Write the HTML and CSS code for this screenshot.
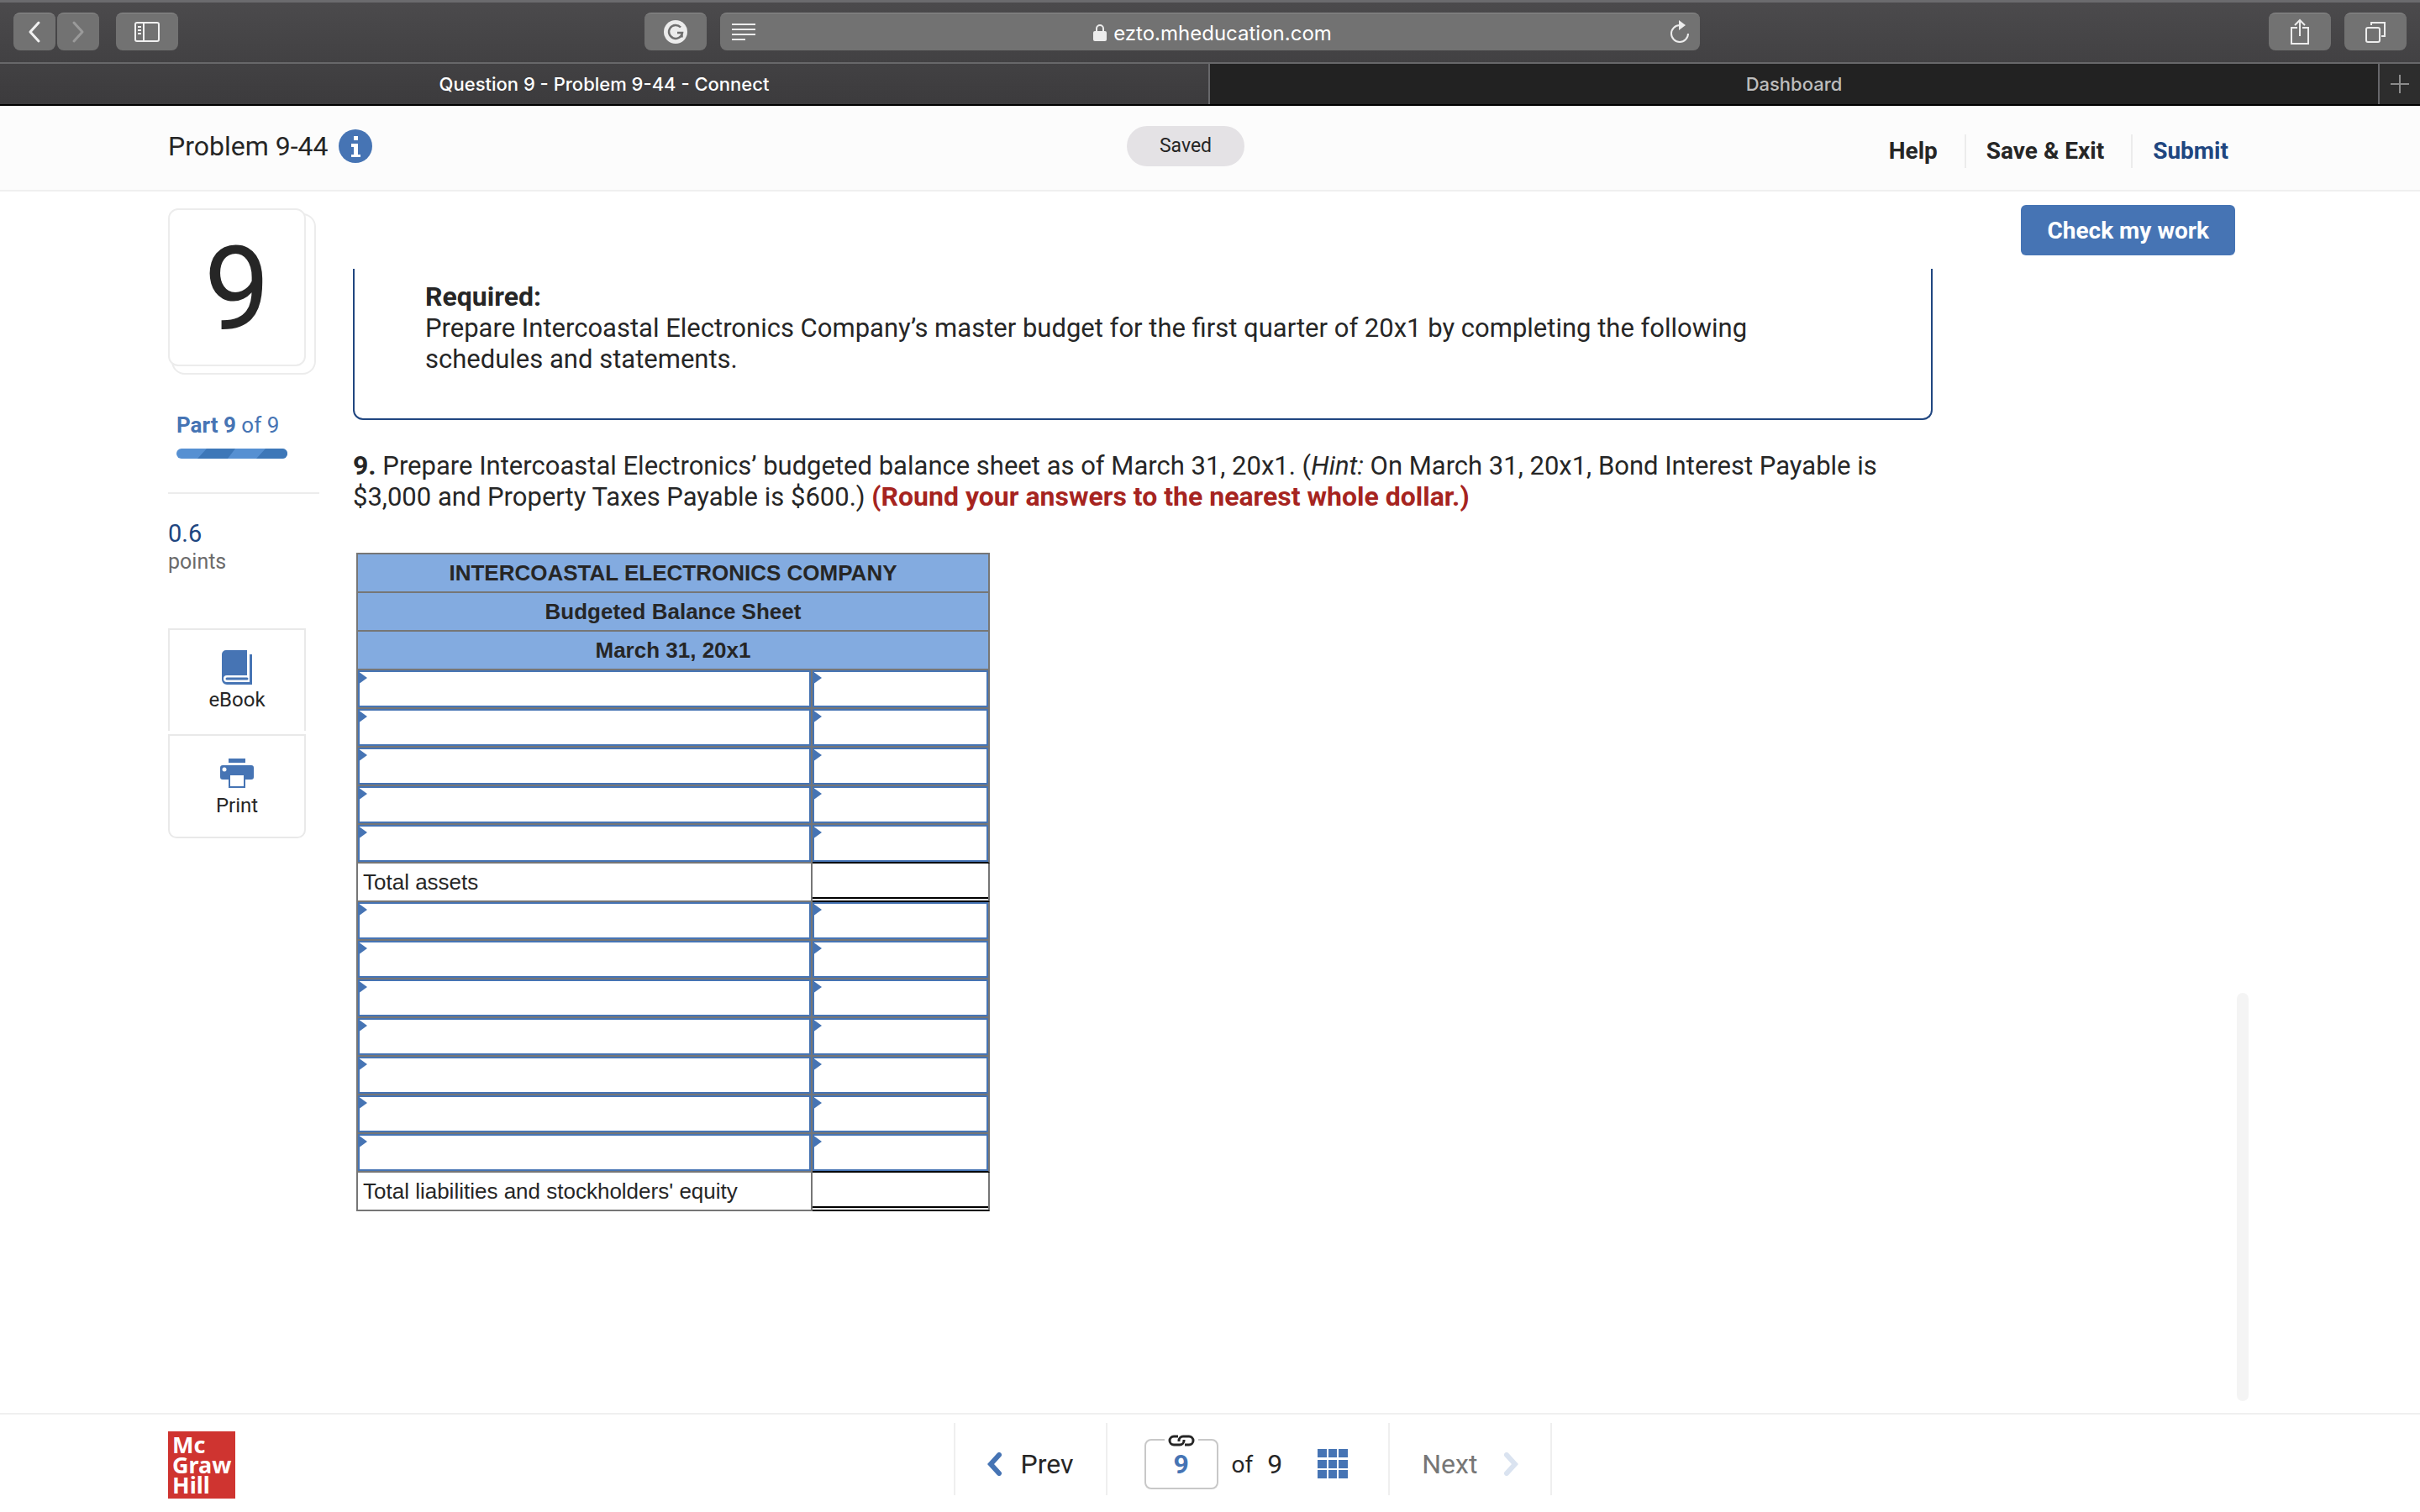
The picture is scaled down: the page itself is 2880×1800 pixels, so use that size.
FILE: index.html
```
<!DOCTYPE html>
<html lang="en">
<head>
    <meta charset="UTF-8">
    <meta name="viewport" content="width=device-width, initial-scale=1.0">
    <title>Question 9 - Problem 9-44 - Connect</title>
    <link rel="stylesheet" href="styles.css">
</head>
<body>
    <div class="toolbar">
        <div class="tool-group">
            <button class="tool tool-small" aria-label="Back">
                <svg width="16" height="28" viewBox="0 0 16 28"><path d="M13 3L3 14l10 11" fill="none" stroke="#f0f0f0" stroke-width="3" stroke-linecap="round" stroke-linejoin="round"/></svg>
            </button>
            <button class="tool tool-small" aria-label="Forward">
                <svg width="16" height="28" viewBox="0 0 16 28"><path d="M3 3l10 11L3 25" fill="none" stroke="#9a9a9a" stroke-width="3" stroke-linecap="round" stroke-linejoin="round"/></svg>
            </button>
            <button class="tool tool-sidebar" aria-label="Show sidebar">
                <svg width="30" height="24" viewBox="0 0 30 24" fill="none" stroke="#f0f0f0" stroke-width="2"><rect x="1" y="1" width="28" height="22" rx="2"/><path d="M11 1v22M4 6h4M4 10h4M4 14h4"/></svg>
            </button>
        </div>
        <div class="tool-group tool-center">
            <button class="tool" aria-label="Grammarly">
                <svg width="30" height="30" viewBox="0 0 30 30"><circle cx="15" cy="15" r="14" fill="#ececec"/><path d="M21 9.500a8 8 0 1 0 2 6.500h-6M22.500 15.500v6" fill="none" stroke="#6f6f6f" stroke-width="2.500"/></svg>
            </button>
            <div class="address">
                <svg width="28" height="22" viewBox="0 0 28 22"><path d="M0 2h28M0 8h28M0 14h28M0 20h16" stroke="#ececec" stroke-width="2"/></svg>
                <span class="address-text">
                    <svg width="16" height="20" viewBox="0 0 16 20"><rect y="8" width="16" height="12" rx="2" fill="#ececec"/><path d="M4 9V5a4 4 0 0 1 8 0v4" fill="none" stroke="#ececec" stroke-width="2"/></svg>
                    ezto.mheducation.com
                </span>
                <button class="reload" aria-label="Reload">
                    <svg width="24" height="28" viewBox="0 0 24 28"><path d="M12 6a10 10 0 1 0 10 10" fill="none" stroke="#ececec" stroke-width="2"/><path d="M11 0l8 6-8 6z" fill="#ececec"/></svg>
                </button>
            </div>
        </div>
        <div class="tool-group tool-right">
            <button class="tool" aria-label="Share">
                <svg width="24" height="32" viewBox="0 0 24 32" fill="none" stroke="#ececec" stroke-width="2"><path d="M9 11H2v19h20V11h-7M12 21V3M6 8l6-6 6 6"/></svg>
            </button>
            <button class="tool" aria-label="Show tabs">
                <svg width="24" height="26" viewBox="0 0 24 26" fill="none" stroke="#ececec" stroke-width="2"><rect x="1" y="8" width="16" height="17" rx="2"/><path d="M7 5V2h16v16h-4"/></svg>
            </button>
        </div>
    </div>
    <div class="tabs">
        <button class="tab tab-active">Question 9 - Problem 9-44 - Connect</button>
        <button class="tab tab-other">Dashboard</button>
        <button class="tab tab-add" aria-label="New tab">
            <svg width="22" height="22" viewBox="0 0 22 22"><path d="M11 0v22M0 11h22" stroke="#8c8c8c" stroke-width="2"/></svg>
        </button>
    </div>

    <header class="header">
        <h1 class="title">
            Problem 9-44
            <svg width="40" height="40" viewBox="0 0 40 40"><circle cx="20" cy="20" r="20" fill="#4674b4"/><path d="M18 8h5v5h-5zM15 17h8v13h3v3H15v-3h3v-9h-3z" fill="#fff"/></svg>
        </h1>
        <span class="saved">Saved</span>
        <nav class="actions">
            <a href="#">Help</a>
            <a href="#">Save &amp; Exit</a>
            <a href="#" class="submit">Submit</a>
        </nav>
    </header>

    <main class="main">
        <aside class="side">
            <div class="card">9</div>
            <div class="part">
                <b>Part 9</b> of 9
                <svg width="132" height="12" viewBox="0 0 132 12"><clipPath id="pill"><rect width="132" height="12" rx="6"/></clipPath><g clip-path="url(#pill)"><rect width="132" height="12" fill="#5690d2"/><path d="M36 0h34l-9 12H25zM106 0h34v12H95z" fill="#3d77b8"/></g></svg>
            </div>
            <div class="points"><span>0.6</span>points</div>
            <div class="tiles">
                <button class="tile tile-book">
                    <svg width="36" height="41" viewBox="0 0 36 41"><path d="M5 0h25v30H6a4 4 0 0 0 0 8h27V5h3v36H6a6 6 0 0 1-6-6V5a5 5 0 0 1 5-5z" fill="#4674b4"/><path d="M6 34h24" stroke="#4674b4" stroke-width="3" stroke-linecap="round"/></svg>
                    eBook
                </button>
                <button class="tile tile-print">
                    <svg width="40" height="36" viewBox="0 0 40 36"><path d="M10 0h20v5H10zM3 8h34a3 3 0 0 1 3 3v11a3 3 0 0 1-3 3h-7v10H10V25H3a3 3 0 0 1-3-3V11a3 3 0 0 1 3-3z" fill="#4674b4"/><path d="M12 20h16v13H12z" fill="#fff"/><circle cx="5" cy="13" r="2.500" fill="#fff"/></svg>
                    Print
                </button>
            </div>
        </aside>

        <section class="content">
            <div class="required">
                <b>Required:</b><br>
                Prepare Intercoastal Electronics Company’s master budget for the first quarter of 20x1 by completing the following schedules and statements.
            </div>
            <p class="question"><b>9.</b> Prepare Intercoastal Electronics’ budgeted balance sheet as of March 31, 20x1. (<i>Hint:</i> On March 31, 20x1, Bond Interest Payable is $3,000 and Property Taxes Payable is $600.) <b class="round">(Round your answers to the nearest whole dollar.)</b></p>

            <table class="sheet">
                <colgroup>
                    <col class="col-name">
                    <col class="col-amount">
                </colgroup>
                <thead>
                    <tr><th colspan="2">INTERCOASTAL ELECTRONICS COMPANY</th></tr>
                    <tr><th colspan="2">Budgeted Balance Sheet</th></tr>
                    <tr><th colspan="2">March 31, 20x1</th></tr>
                </thead>
                <tbody>
                    <tr><td class="entry"><input type="text" aria-label="Asset 1"></td><td class="entry"><input type="text" aria-label="Asset 1 amount"></td></tr>
                    <tr><td class="entry"><input type="text" aria-label="Asset 2"></td><td class="entry"><input type="text" aria-label="Asset 2 amount"></td></tr>
                    <tr><td class="entry"><input type="text" aria-label="Asset 3"></td><td class="entry"><input type="text" aria-label="Asset 3 amount"></td></tr>
                    <tr><td class="entry"><input type="text" aria-label="Asset 4"></td><td class="entry"><input type="text" aria-label="Asset 4 amount"></td></tr>
                    <tr><td class="entry"><input type="text" aria-label="Asset 5"></td><td class="entry last"><input type="text" aria-label="Asset 5 amount"></td></tr>
                    <tr><td class="total">Total assets</td><td class="sum"><div class="rule"></div></td></tr>
                    <tr><td class="entry"><input type="text" aria-label="Liability 1"></td><td class="entry"><input type="text" aria-label="Liability 1 amount"></td></tr>
                    <tr><td class="entry"><input type="text" aria-label="Liability 2"></td><td class="entry"><input type="text" aria-label="Liability 2 amount"></td></tr>
                    <tr><td class="entry"><input type="text" aria-label="Liability 3"></td><td class="entry"><input type="text" aria-label="Liability 3 amount"></td></tr>
                    <tr><td class="entry"><input type="text" aria-label="Liability 4"></td><td class="entry"><input type="text" aria-label="Liability 4 amount"></td></tr>
                    <tr><td class="entry"><input type="text" aria-label="Liability 5"></td><td class="entry"><input type="text" aria-label="Liability 5 amount"></td></tr>
                    <tr><td class="entry"><input type="text" aria-label="Equity 1"></td><td class="entry"><input type="text" aria-label="Equity 1 amount"></td></tr>
                    <tr><td class="entry"><input type="text" aria-label="Equity 2"></td><td class="entry last"><input type="text" aria-label="Equity 2 amount"></td></tr>
                    <tr><td class="total">Total liabilities and stockholders' equity</td><td class="sum"><div class="rule"></div></td></tr>
                </tbody>
            </table>
        </section>

        <div class="check">
            <button class="check-button">Check my work</button>
        </div>
        <div class="scroll-thumb"></div>
    </main>

    <footer class="footer">
        <div class="logo">Mc<br>Graw<br>Hill</div>
        <nav class="pager">
            <button class="step prev">
                <svg width="18" height="28" viewBox="0 0 18 28"><path d="M14 3L4 14l10 11" fill="none" stroke="#4674b4" stroke-width="6" stroke-linecap="round"/></svg>
                Prev
            </button>
            <div class="position">
                <div class="page-box">
                    <input type="text" value="9" aria-label="Question number">
                    <span class="link-icon">
                        <svg width="32" height="14" viewBox="0 0 32 14" fill="none" stroke="#262626" stroke-width="3"><path d="M12 2H7a5 5 0 0 0 0 10h7a5 5 0 0 0 5-5V6"/><path d="M20 12h5a5 5 0 0 0 0-10h-7a5 5 0 0 0-5 5v1"/></svg>
                    </span>
                </div>
                <span class="of">of</span>
                <span>9</span>
                <button class="grid-button" aria-label="All questions">
                    <svg width="36" height="36" viewBox="0 0 36 36" fill="#4674b4"><path d="M0 0h11v10H0zM13 0h10v10H13zM25 0h11v10H25zM0 13h11v10H0zM13 13h10v10H13zM25 13h11v10H25zM0 25h11v10H0zM13 25h10v10H13zM25 25h11v10H25z"/></svg>
                </button>
            </div>
            <button class="step next" disabled>
                Next
                <svg width="18" height="28" viewBox="0 0 18 28"><path d="M4 3l10 11L4 25" fill="none" stroke="#dae3f0" stroke-width="6" stroke-linecap="round"/></svg>
            </button>
        </nav>
    </footer>
</body>
</html>
```
FILE: styles.css
```
* {
    box-sizing: border-box;
}

body {
    margin: 0;
    min-height: 100vh;
    display: flex;
    flex-direction: column;
    background: white;
    color: #262626;
    font-family: Roboto, "Liberation Sans", sans-serif;
    font-size: 31px;
    line-height: 37px;
}

button, input {
    font: inherit;
    color: inherit;
}

button {
    padding: 0;
    border: none;
    background: none;
    cursor: pointer;
}

svg {
    display: block;
    flex: none;
}

/* Browser bar */
.toolbar {
    display: grid;
    grid-template-columns: 196px 555fr 1256fr 677fr 164px;
    height: 76px;
    padding: 12px 16px 0;
    border-top: 3px solid #6b6b6e;
    border-bottom: 2px solid #676769;
    background: linear-gradient(#4b4a4c, #424143);
    font-family: Inter, sans-serif;
    font-size: 24px;
}

.tool-group {
    display: flex;
    align-items: flex-start;
}

.tool-center {
    grid-column: 3;
    gap: 16px;
}

.tool-right {
    grid-column: 5;
    gap: 16px;
}

.tool {
    display: flex;
    align-items: center;
    justify-content: center;
    flex: none;
    width: 74px;
    height: 45px;
    border-top: 1px solid #8b8b8b;
    border-radius: 8px;
    background: #727272;
}

.tool-small {
    width: 50px;
    margin-right: 2px;
}

.tool-sidebar {
    margin-left: 18px;
}

.address {
    display: flex;
    align-items: center;
    justify-content: space-between;
    flex: 1;
    height: 45px;
    padding: 0 12px 0 14px;
    border-top: 1px solid #8b8b8b;
    border-radius: 8px;
    background: #727272;
    color: white;
}

.address-text {
    display: flex;
    align-items: center;
    gap: 8px;
    padding-top: 2px;
}

.tabs {
    display: flex;
    height: 50px;
    border-bottom: 2px solid black;
    font-family: Inter, sans-serif;
    font-size: 22px;
}

.tab {
    display: flex;
    align-items: center;
    justify-content: center;
    border-right: 2px solid #67676a;
}

.tab-active {
    width: 50%;
    background: linear-gradient(#424143, #3c3b3d);
    color: white;
    font-weight: 500;
}

.tab-other {
    flex: 1;
    background: #222222;
    color: #bdbdbd;
    font-weight: 500;
}

.tab-add {
    width: 48px;
    border: none;
    background: #2d2d2d;
}

/* Assignment header */
.header {
    display: grid;
    grid-template-columns: 1fr auto 1fr;
    height: 102px;
    padding: 0 228px 0 200px;
    border-bottom: 2px solid #efefef;
    background: #fcfcfc;
}

.title {
    display: flex;
    align-items: center;
    gap: 13px;
    height: 40px;
    margin: 28px 0 0;
    font-size: 32px;
    font-weight: 400;
}

.saved {
    height: 48px;
    margin: 24px 30px 0 0;
    padding: 0 39px;
    border-radius: 24px;
    background: #e4e2e5;
    font-size: 23px;
    line-height: 48px;
}

.actions {
    display: flex;
    justify-content: flex-end;
    margin-top: 34px;
    font-size: 28px;
    font-weight: 700;
    line-height: 40px;
}

.actions a {
    height: 40px;
    margin-left: 32px;
    padding-left: 24px;
    border-left: 2px solid #ececec;
    color: inherit;
    text-decoration: none;
}

.actions a:first-child {
    border: none;
}

.actions .submit {
    color: #204680;
}

/* Question area */
.main {
    position: relative;
    display: flex;
    flex: 1;
    padding: 16px 220px 0 200px;
}

.side {
    width: 180px;
    margin: 4px 40px 0 0;
}

.card {
    position: relative;
    width: 164px;
    height: 188px;
    border: 2px solid #ececec;
    border-radius: 12px;
    background: white;
    font-size: 140px;
    line-height: 188px;
    text-align: center;
}

.card::after {
    content: "";
    position: absolute;
    z-index: -1;
    top: 4px;
    left: 4px;
    width: 168px;
    height: 188px;
    border: 2px solid #ececec;
    border-radius: 16px;
    margin-left: -2px;
}

.part {
    padding: 52px 0 40px 10px;
    border-bottom: 2px solid #ececec;
    color: #4674b4;
    font-size: 26px;
    line-height: 36px;
}

.part svg {
    margin-top: 10px;
}

.points {
    padding: 30px 0 62px;
    color: #6b6b6b;
    font-size: 25px;
    line-height: 34px;
}

.points span {
    display: block;
    color: #204680;
    font-size: 29px;
}

.tile {
    display: flex;
    flex-direction: column;
    align-items: center;
    width: 164px;
    height: 122px;
    padding-top: 24px;
    border: 2px solid #e9e9e9;
    border-bottom: none;
    font-size: 24px;
    line-height: 36px;
}

.tile-print {
    height: 124px;
    margin-top: 4px;
    padding-top: 27px;
    border-bottom: 2px solid #e9e9e9;
    border-radius: 0 0 10px 10px;
}

.tile-print svg {
    margin-bottom: 2px;
}

.content {
    flex: 1;
    padding-top: 76px;
}

.required {
    padding: 15px 84px 52px;
    border: 2px solid #204680;
    border-top: none;
    border-radius: 0 0 12px 12px;
}

.required b, .question b {
    font-size: 32px;
}

.question {
    margin: 36px 0 48px;
}

.question .round {
    color: #a62420;
}

/* Balance sheet */
.sheet {
    width: 754px;
    margin-left: 4px;
    table-layout: fixed;
    border-collapse: separate;
    border-spacing: 0;
    border-top: 2px solid #767676;
    border-left: 2px solid #767676;
    font-family: "Liberation Sans", Arial, sans-serif;
    font-size: 26px;
    line-height: 44px;
}

.col-amount {
    width: 211px;
}

.sheet th, .sheet td {
    height: 46px;
    padding: 0;
    border-right: 2px solid #767676;
    border-bottom: 2px solid #767676;
}

.sheet th {
    background: #83abe0;
}

.sheet .entry {
    position: relative;
}

.entry input {
    display: block;
    width: 100%;
    height: 44px;
    padding: 0 14px;
    border: 2px solid #4674b4;
    outline: none;
}

.entry::before {
    content: "";
    position: absolute;
    top: 1px;
    left: 0;
    border: 8px solid transparent;
    border-left: 11px solid #4674b4;
    border-right: none;
}

.sheet .total {
    padding-left: 6px;
}

.sheet .last, .sheet .sum {
    border-bottom-color: black;
}

.rule {
    height: 42px;
    border-bottom: 2px solid black;
    margin-bottom: 2px;
}

.check {
    width: 360px;
    text-align: right;
}

.check-button {
    height: 60px;
    padding: 0 31px;
    border-radius: 6px;
    background: #4674b4;
    color: white;
    font-size: 28px;
    font-weight: 700;
}

.scroll-thumb {
    position: absolute;
    right: 204px;
    bottom: 14px;
    width: 14px;
    height: 486px;
    border-radius: 7px;
    background: #f4f4f4;
}

/* Footer */
.footer {
    display: grid;
    grid-template-columns: 1fr auto 1fr;
    height: 118px;
    padding: 10px 98px 0 200px;
    border-top: 2px solid #efefef;
}

.logo {
    width: 80px;
    height: 80px;
    margin-top: 10px;
    padding: 4px 0 0 5px;
    background: #cf3430;
    color: white;
    font-family: "Noto Sans", sans-serif;
    font-size: 27px;
    font-weight: 700;
    line-height: 24px;
}

.pager {
    display: flex;
    height: 86px;
    border-left: 2px solid #efefef;
    font-size: 32px;
}

.step, .position {
    display: flex;
    align-items: center;
    height: 86px;
    padding: 12px 38px 0;
    border-right: 2px solid #efefef;
}

.prev {
    gap: 22px;
}

.next {
    gap: 31px;
    color: #767676;
}

.position {
    padding: 12px 48px 0 44px;
}

.page-box {
    position: relative;
}

.page-box input {
    display: block;
    width: 88px;
    height: 60px;
    padding: 0;
    border: 2px solid #c8c8c8;
    border-radius: 8px;
    color: #4674b4;
    font-weight: 700;
    text-align: center;
}

.link-icon {
    position: absolute;
    top: -5px;
    left: 24px;
    padding: 0 4px;
    background: white;
}

.of {
    margin: 0 17px 0 16px;
    font-size: 28px;
}

.grid-button {
    margin-left: 42px;
}
```
